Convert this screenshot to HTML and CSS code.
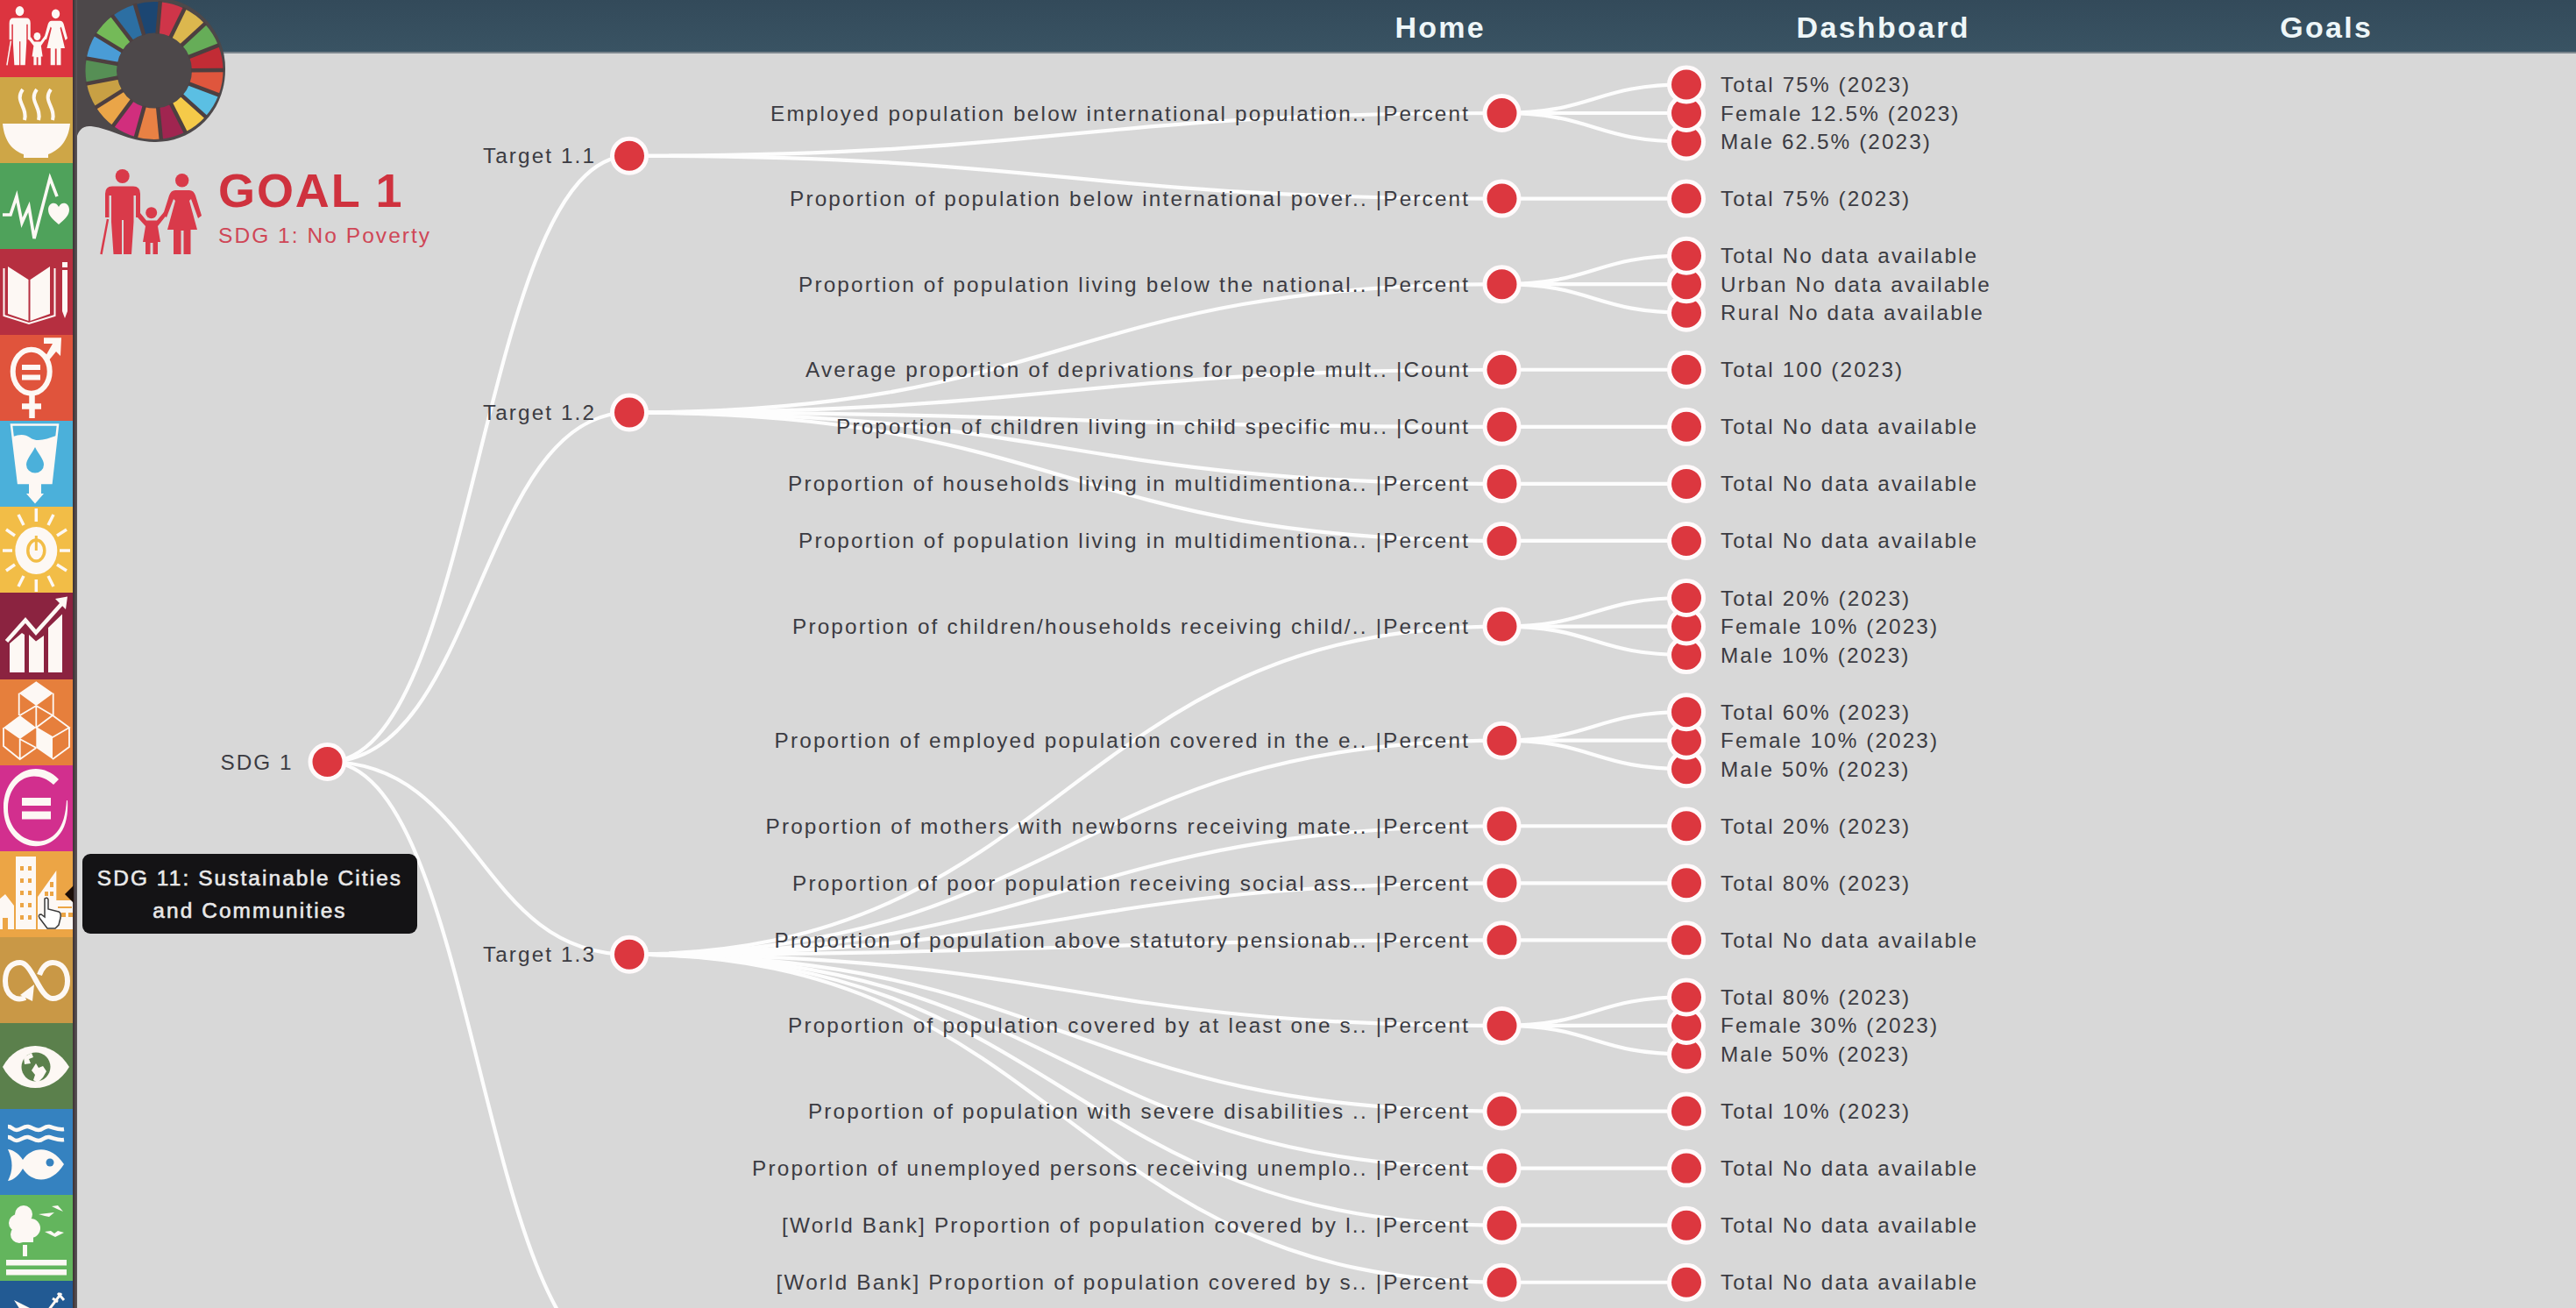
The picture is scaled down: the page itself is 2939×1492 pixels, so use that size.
FILE: index.html
```html
<!DOCTYPE html>
<html lang="en">
<head>
<meta charset="utf-8">
<title>SDG 1: No Poverty</title>
<link rel="stylesheet" href="styles.css">
</head>
<body>
<svg class="defs" aria-hidden="true">
  <symbol id="family" viewBox="0 0 116 98" preserveAspectRatio="none">
    <circle cx="25.7" cy="8" r="8"/>
    <path d="M14 19.5H38Q46 19.5 46 28V55H41V30H38.500V60L36 97H27V58H25V97H15.500L13 60V30H10.500V55H6V28Q6 19.500 14 19.500Z"/>
    <path d="M9 57L1.500 97" fill="none" stroke="currentColor" stroke-width="2.500"/>
    <circle cx="58.700" cy="49.700" r="6.500"/>
    <path d="M46 50L53 58.500H65L73 49L75.500 53L66 65L69 83H66V97H60.500V84H57.500V97H52V83H49L52 65L43 55Z"/>
    <circle cx="93.700" cy="12.700" r="7.700"/>
    <path d="M86 24H102Q107 24 109 30L116 53L112 56L104 34L102 36L111 69H103.500V97H95.500V70H92.500V97H84V69H77L86 36L84 34L76 55L72 52L79 30Q81 24 86 24Z"/>
  </symbol>
</svg>
<div class="app">
  <nav class="goals">
    <a class="tile g1"><svg class="icon" viewBox="0 0 83 98"><use href="#family" x="7" y="17" width="70" height="68"/></svg></a>
    <a class="tile g2"><svg class="icon" viewBox="0 0 83 98"><path class="line" stroke-width="4" d="M26 14C16 27 32 34 28 49M42 14C32 27 48 34 44 49M58 14C48 27 64 34 60 49"/><path d="M3 53H80C78 74 66 84 55 88V92H27V88C15 84 5 74 3 53Z"/></svg></a>
    <a class="tile g3"><svg class="icon" viewBox="0 0 83 98"><path class="line" stroke-width="3.600" d="M3 59H12L19 38L25 68L33 50L39 86L57 17L65 38"/><path d="M67 70C60 64 55 60 55 53C55 45 64 43 67 50C70 43 79 45 79 53C79 60 74 64 67 70Z"/></svg></a>
    <a class="tile g4"><svg class="icon" viewBox="0 0 83 98"><path d="M9 20L32.500 35V82L9 74ZM57 20L34.500 35V82L57 74Z"/><path class="line" stroke-width="2" d="M4.500 22V76L33 85L62.500 76V22"/><path d="M71 15H77V21H71ZM71 24H77V71L74 79L71 71Z"/></svg></a>
    <a class="tile g5"><svg class="icon" viewBox="0 0 83 98"><ellipse class="line" stroke-width="6" cx="35.700" cy="41.600" rx="21" ry="25"/><path d="M25 34H46V40H25ZM25 45.500H46V51.500H25ZM50 3.300H70L69 24L64 19L55 30L51 26L60 10H50Z"/><path class="line" stroke-width="6.500" d="M36.500 67V95M25 81.500H47"/></svg></a>
    <a class="tile g6"><svg class="icon" viewBox="0 0 83 98"><path class="line" stroke-width="2.500" d="M13 4.500H66L58.500 71H21Z"/><path d="M15 18C22 15 29 15 34 19C42 25 53 21 64 17L59 71H47V83H50L40 94.500L30 83H33V71H21Z"/><path class="cut6" d="M40 30C44 38 50 44 50 50A10 9.500 0 0 1 30 50C30 44 36 38 40 30Z"/></svg></a>
    <a class="tile g7"><svg class="icon" viewBox="0 0 83 98"><ellipse cx="41.300" cy="50" rx="24" ry="27"/><ellipse class="cut7" cx="41.300" cy="50" rx="9.500" ry="12" fill="none" stroke-width="3.500"/><path class="cut7" d="M41.300 33V50" stroke-width="3"/><path class="line" stroke-width="3.500" d="M41.300 2V17M41.300 83V97M3 50H14M68 50H80M21 9L27 21M61 9L55 21M21 91L27 79M61 91L55 79M7 26L17 33M76 26L65 33M7 73L17 66M76 73L65 66"/></svg></a>
    <a class="tile g8"><svg class="icon" viewBox="0 0 83 98"><path d="M11 58L25 46L28 48V91H11ZM33 48L41 55.500L50 49V91H33ZM55 40L71 24.500V91H55ZM63 7L77 4.500L75 19Z"/><path class="line" stroke-width="4.500" d="M7.500 55.500L29 31.500L41 45.500L71 12"/></svg></a>
    <a class="tile g9"><svg class="icon" viewBox="0 0 83 98"><path d="M41.300 2.300L60.700 15.700L41.300 30L21.700 15.700ZM22.700 41L41.300 55L22.700 68L4 55ZM41.300 55L60 66V91L41.300 78Z"/><path class="line" stroke-width="1.800" d="M21.700 15.700V41M60.700 15.700V41M41.300 30V55M41.300 30L60 41L79 55L60 66L41.300 55L60 41M41.300 30L22.700 41M4 55V76L22.700 91L41.300 78M22.700 68V91M22.700 68L41.300 78M79 55V77L60 91"/></svg></a>
    <a class="tile g10"><svg class="icon" viewBox="0 0 83 98"><path d="M61 22C38 1 10 17 9 48C8 82 46 99 65 76C72 68 75 55 76 40H77C78 57 75 72 66 81C43 105 4 89 4 48C4 9 42 -10 67 16Z"/><path d="M25 37H58V46H25ZM25 52.500H58V61.500H25Z"/></svg></a>
    <a class="tile g11"><svg class="icon" viewBox="0 0 83 98"><path d="M18 6H41V89H18ZM64.300 22V56H83V89H43V52ZM0 54L6 49L16 62V89H0Z"/><path class="cut11" d="M23 17h4v5h-4zM32 17h4v5h-4zM23 31h4v5h-4zM32 31h4v5h-4zM23 45h4v5h-4zM32 45h4v5h-4zM23 59h4v5h-4zM32 59h4v5h-4zM23 73h4v5h-4zM32 73h4v5h-4zM57 35h4v6h-4zM51 46h4v5h-4zM57 46h4v5h-4zM66 63h16v2H66zM70 70h5v5h-5zM78 70h5v5h-5zM3 76h6v13H3z"/></svg></a>
    <a class="tile g12"><svg class="icon" viewBox="0 0 83 98"><path class="line" stroke-width="6" d="M29 69C17 74 6 65 6 50C6 35 14 29 23 29C37 29 45 70 60 70C70 70 77 62 77 50C77 37 70 29 60 29C53 29 48 35 45 43"/><path d="M39 54L37 73L23 66Z"/></svg></a>
    <a class="tile g13"><svg class="icon" viewBox="0 0 83 98"><path d="M3 50C20 18 60 18 79 50C60 82 20 82 3 50Z"/><circle class="cut13" cx="41" cy="50" r="16.500"/><path d="M27 39L36 34L38 39L33 41L35 46L28 47ZM41 46L44 51L49 49L53 55L49 62L43 68L38 65L40 59L36 54Z"/></svg></a>
    <a class="tile g14"><svg class="icon" viewBox="0 0 83 98"><path class="line" stroke-width="4.500" d="M9 20C14 20 14 24 19 24S27 19 32 20S39 24 44 24S51 19 56 20S66 24 73 23M9 32C14 32 14 36 19 36S27 31 32 32S39 36 44 36S51 31 56 32S66 36 73 35"/><path d="M9 46C17 47 23 53 26 58C36 43 58 40 73 63C58 87 36 84 26 68C22 75 16 81 9 82C15 70 15 59 9 46Z"/><circle class="cut14" cx="57" cy="61" r="4.500"/></svg></a>
    <a class="tile g15"><svg class="icon" viewBox="0 0 83 98"><circle cx="27" cy="22" r="10"/><circle cx="20" cy="32" r="10"/><circle cx="35" cy="38" r="11"/><circle cx="22" cy="45" r="10"/><path d="M22 40H38V54H22ZM26 57H31V70H26ZM7 74H76V80.500H7ZM7 85H76V91.500H7Z"/><path d="M44 22L53 21L62 20L56 25L51 24ZM59 13L66 12L72 19L65 16ZM51 42L58 41L62 44L66 41L73 43L63 48Z"/></svg></a>
    <a class="tile g16"><svg class="icon" viewBox="0 0 83 98"><path d="M16 22L34 31L50 44H30Z"/><path class="line" stroke-width="3" d="M52 38L70 14M60 20L66 24M66 14L73 22"/></svg></a>
    <span class="tip-arrow"></span>
    <svg class="cursor" viewBox="0 0 28 38"><path d="M8 2Q11 0 12 3V14L24 17Q27 18 26 24L24 32L20 36H11L2 24Q0 20 4 20L8 23Z"/></svg>
  </nav>
  <main class="main">
    <header class="topbar">
      <a class="menu">Home</a>
      <a class="menu">Dashboard</a>
      <a class="menu">Goals</a>
    </header>
    <section class="board">
      <svg class="tree" id="tree" viewBox="88 60 2851 1432"></svg>
      <div class="goal">
        <svg class="goal-icon"><use href="#family" width="116" height="98"/></svg>
        <div class="goal-text">
          <h1 class="goal-title">GOAL 1</h1>
          <p class="goal-name">SDG 1: No Poverty</p>
        </div>
      </div>
    </section>
    <svg class="wheel" id="wheel" viewBox="83 0 180 170"></svg>
    <div class="tooltip">SDG 11: Sustainable Cities<br>and Communities</div>
  </main>
</div>
<script src="script.js"></script>
</body>
</html>
```

FILE: styles.css
```css
* { box-sizing: border-box; }

body {
  margin: 0;
  overflow: hidden;
  background: #d8d8d8;
  font-family: "Liberation Sans", Arial, sans-serif;
}

.defs { position: absolute; width: 0; height: 0; }

.app { display: flex; width: 100vw; height: 1492px; overflow: hidden; }

/* goal strip */
.goals {
  position: relative;
  z-index: 2;
  flex: 0 0 88px;
  height: 1492px;
  overflow: hidden;
  background: linear-gradient(90deg, #3c3032 83px, #5d585b 88px);
}
.tile { display: block; width: 83px; height: 98.070px; color: #fdf8f4; }
.tile:first-child { margin-top: -10px; }
.icon { display: block; width: 83px; height: 98.070px; fill: currentColor; }
.line { fill: none; stroke: currentColor; }
.g1 { background: #dc343f; }
.g2 { background: #cea647; }
.g3 { background: #4fa25b; }
.g4 { background: #b62f40; }
.g5 { background: #e0543c; }
.g6 { background: #4bb0da; }
.g7 { background: #f2bd47; }
.g8 { background: #8b2340; }
.g9 { background: #e67f3c; }
.g10 { background: #d22f8e; }
.g11 { background: #eca545; }
.g12 { background: #c99846; }
.g13 { background: #5b804c; }
.g14 { background: #3582c0; }
.g15 { background: #63b55d; }
.g16 { background: #225a93; }
.cut6 { fill: #4bb0da; }
.cut7 { stroke: #f2bd47; }
.cut11 { fill: #eca545; }
.cut13 { fill: #5b804c; }
.cut14 { fill: #3582c0; }

.tip-arrow {
  position: absolute;
  left: 74px;
  top: 1010px;
  border: 10px solid transparent;
  border-right-color: #1b0e08;
  border-left-width: 0;
}
.cursor {
  position: absolute;
  left: 43px;
  top: 1023px;
  width: 28px;
  height: 38px;
  fill: #fff;
  stroke: #3a3a3a;
  stroke-width: 1.5;
}

/* header */
.main { position: relative; flex: 1; display: flex; flex-direction: column; }
.topbar {
  flex: 0 0 61px;
  height: 61px;
  display: grid;
  grid-template-columns: repeat(3, 505.500px);
  grid-template-rows: 59px;
  justify-content: end;
  padding-right: 32px;
  background: linear-gradient(#334a5a, #395363);
  border-bottom: 2px solid #7b858d;
}
.menu {
  height: 59px;
  text-align: center;
  font-size: 34px;
  font-weight: 700;
  line-height: 62px;
  letter-spacing: 2.300px;
  color: #eef6f8;
}

/* tree */
.board { position: relative; flex: 0 0 1431px; }
.tree { display: block; width: 2851px; height: 1432px; margin-top: -1px; clip-path: inset(1px 0 0 0); }
.link { fill: none; stroke: #fdfdfd; stroke-width: 4.200; }
.node { fill: #dc373f; stroke: #fffafb; stroke-width: 5; }
.label { font-size: 24.300px; fill: #3b3b42; }

.goal { position: absolute; left: 26px; top: 132px; display: flex; gap: 19px; color: #d93a4a; }
.goal-icon { width: 116px; height: 98px; fill: currentColor; }
.goal-text { display: flex; flex-direction: column; }
.goal-title { margin: -4px 0 0; font-size: 54px; line-height: 56px; letter-spacing: 1.900px; color: #cf323e; }
.goal-name { margin: 9px 0 0; font-size: 24.500px; line-height: 30px; letter-spacing: 2.050px; color: #cf4656; }

.wheel { position: absolute; left: -5px; top: 0; width: 180px; height: 170px; }
.wheel-base { fill: #4d484a; }
.wheel-gap { stroke: #4d3f40; stroke-width: 4.500; }

.tooltip {
  position: absolute;
  left: 6px;
  top: 974px;
  width: 382px;
  height: 91px;
  padding-top: 9px;
  border-radius: 9px;
  background: #141315;
  color: #e9e9e9;
  font-size: 24.400px;
  line-height: 37px;
  letter-spacing: 2.100px;
  text-align: center;
  -webkit-text-stroke: 0.600px #e9e9e9;
}
```

FILE: script.js
```js
const NS = "http://www.w3.org/2000/svg";
const COL = { root: 373.5, target: 718, indicator: 1713.5, leaf: 1924 };
const LABEL_END = 1675;
const rowY = r => 129 + (r - 1) * 32.53;

function add(parent, name, attrs, text) {
  const el = document.createElementNS(NS, name);
  for (const k in attrs) el.setAttribute(k, attrs[k]);
  if (text) el.textContent = text;
  parent.appendChild(el);
  return el;
}

// [row, label start, label, [leaves]]
const targets = [
  { name: "Target 1.1", row: 2.5, items: [
    [1, 879, "Employed population below international population.. |Percent", ["Total 75% (2023)", "Female 12.5% (2023)", "Male 62.5% (2023)"]],
    [4, 901, "Proportion of population below international pover.. |Percent", ["Total 75% (2023)"]]
  ]},
  { name: "Target 1.2", row: 11.5, items: [
    [7, 911, "Proportion of population living below the national.. |Percent", ["Total No data available", "Urban No data available", "Rural No data available"]],
    [10, 919, "Average proportion of deprivations for people mult.. |Count", ["Total 100 (2023)"]],
    [12, 954, "Proportion of children living in child specific mu.. |Count", ["Total No data available"]],
    [14, 899, "Proportion of households living in multidimentiona.. |Percent", ["Total No data available"]],
    [16, 911, "Proportion of population living in multidimentiona.. |Percent", ["Total No data available"]]
  ]},
  { name: "Target 1.3", row: 30.5, items: [
    [19, 904, "Proportion of children/households receiving child/.. |Percent", ["Total 20% (2023)", "Female 10% (2023)", "Male 10% (2023)"]],
    [23, 883.5, "Proportion of employed population covered in the e.. |Percent", ["Total 60% (2023)", "Female 10% (2023)", "Male 50% (2023)"]],
    [26, 873.5, "Proportion of mothers with newborns receiving mate.. |Percent", ["Total 20% (2023)"]],
    [28, 904, "Proportion of poor population receiving social ass.. |Percent", ["Total 80% (2023)"]],
    [30, 883.5, "Proportion of population above statutory pensionab.. |Percent", ["Total No data available"]],
    [33, 899, "Proportion of population covered by at least one s.. |Percent", ["Total 80% (2023)", "Female 30% (2023)", "Male 50% (2023)"]],
    [36, 922, "Proportion of population with severe disabilities .. |Percent", ["Total 10% (2023)"]],
    [38, 858, "Proportion of unemployed persons receiving unemplo.. |Percent", ["Total No data available"]],
    [40, 892, "[World Bank] Proportion of population covered by l.. |Percent", ["Total No data available"]],
    [42, 885.5, "[World Bank] Proportion of population covered by s.. |Percent", ["Total No data available"]]
  ]}
];

const tree = document.getElementById("tree");
const links = add(tree, "g", {});
const nodes = add(tree, "g", {});
const labels = add(tree, "g", {});

function link(x1, y1, x2, y2) {
  const m = (x1 + x2) / 2;
  add(links, "path", { class: "link", d: `M${x1},${y1}C${m},${y1} ${m},${y2} ${x2},${y2}` });
}
function node(x, y) {
  add(nodes, "circle", { class: "node", cx: x, cy: y, r: 19.5 });
}
function label(x, y, text, width) {
  const attrs = { class: "label", x: x, y: y + 8.5 };
  if (width) attrs.textLength = width;
  else attrs["letter-spacing"] = 2.1;
  add(labels, "text", attrs, text);
}

const rootY = 869;
targets.forEach(t => {
  const ty = rowY(t.row);
  link(COL.root, rootY, COL.target, ty);
  t.items.forEach(([row, start, text, leaves]) => {
    const y = rowY(row);
    link(COL.target, ty, COL.indicator, y);
    const first = row - (leaves.length - 1) / 2;
    for (let i = leaves.length - 1; i >= 0; i--) {
      const ly = rowY(first + i);
      link(COL.indicator, y, COL.leaf, ly);
      node(COL.leaf, ly);
      label(1963, ly, leaves[i]);
    }
    node(COL.indicator, y);
    label(start, y, text, LABEL_END - start);
  });
  node(COL.target, ty);
  label(551, ty, t.name, 127);
});
link(COL.root, rootY, COL.target, 1560);
node(COL.root, rootY);
label(251.5, rootY, "SDG 1", 81);

// goal colour wheel
const wheel = document.getElementById("wheel");
const colors = ["#cf3549", "#dcb74e", "#66ad58", "#c22c35", "#df563d", "#5bbfe3", "#f5ca49", "#a02550", "#e88144",
  "#d12e7d", "#eaa548", "#c8a044", "#568f55", "#4a9cd6", "#74ba58", "#2c6fa3", "#1c4672"];
add(wheel, "path", { class: "wheel-base", d: "M83 0H112L178 -3A81 81 0 0 1 257 79C257 130 218 163 176 162C145 161 128 147 104 144C94 143 90 149 88 155H83Z" });
const CX = 176, CY = 80.5, R = 78.5, r = 43, step = 360 / 17;
const pt = (a, d) => {
  const rad = a * Math.PI / 180;
  return `${(CX + d * Math.sin(rad)).toFixed(2)} ${(CY - d * Math.cos(rad)).toFixed(2)}`;
};
colors.forEach((c, i) => {
  const a = 15.5 + i * step - step / 2, b = a + step;
  add(wheel, "path", { fill: c, d: `M${pt(a, r)}L${pt(a, R)}A${R} ${R} 0 0 1 ${pt(b, R)}L${pt(b, r)}A${r} ${r} 0 0 0 ${pt(a, r)}Z` });
});
colors.forEach((c, i) => {
  const a = 15.5 + i * step - step / 2;
  add(wheel, "path", { class: "wheel-gap", d: `M${pt(a, r - 1)}L${pt(a, R + 1)}` });
});
```
